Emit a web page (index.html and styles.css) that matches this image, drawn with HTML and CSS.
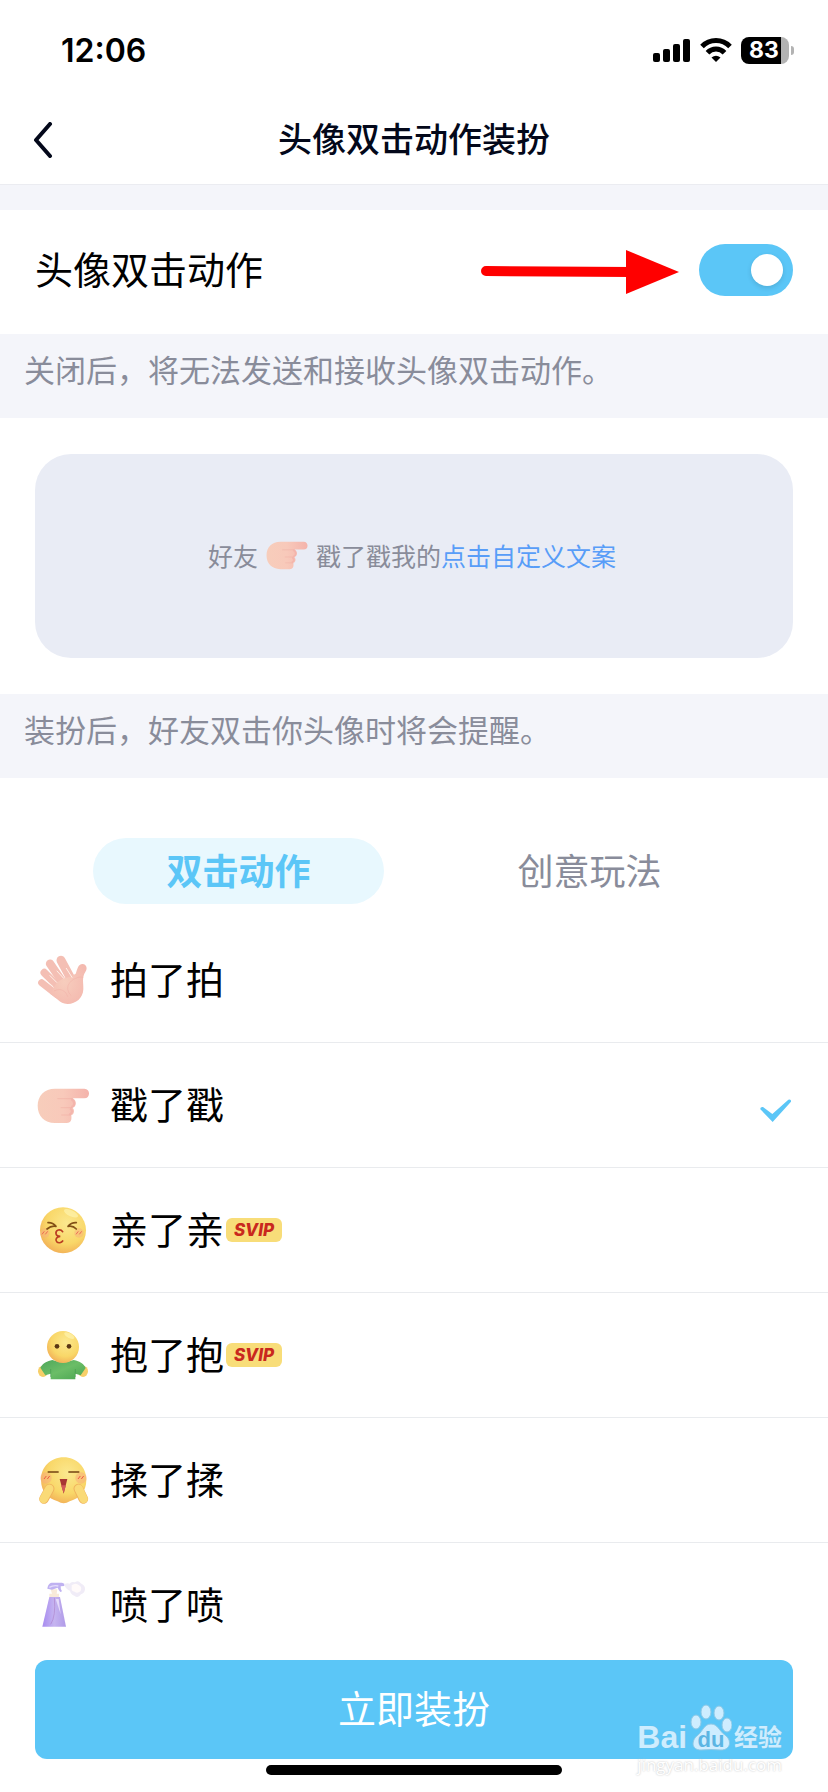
FILE: index.html
```html
<!DOCTYPE html>
<html lang="zh-CN">
<head>
    <meta charset="UTF-8">
    <meta name="viewport" content="width=device-width, initial-scale=1.0">
    <title>头像双击动作装扮</title>
    <link rel="stylesheet" href="styles.css">
</head>
<body>
    <div class="app">
        <div class="status-bar">
            <span class="time">12:06</span>
            <div class="status-icons">
                <svg class="signal" viewBox="0 0 38 24">
                    <rect x="0" y="15" width="7" height="9" rx="2"/>
                    <rect x="10" y="11" width="7" height="13" rx="2"/>
                    <rect x="20" y="6" width="7" height="18" rx="2"/>
                    <rect x="30" y="1" width="7" height="23" rx="2"/>
                </svg>
                <svg class="wifi" viewBox="0 0 32 24">
                    <path d="M2 8.500A19.500 19.500 0 0 1 30 8.500" fill="none" stroke="#000" stroke-width="5"/>
                    <path d="M7.500 14.800A11.500 11.500 0 0 1 24.500 14.800" fill="none" stroke="#000" stroke-width="5"/>
                    <path d="M11.500 19.500Q16 16 20.500 19.500L16 24Z"/>
                </svg>
                <div class="battery"><span class="battery-level">83</span></div>
            </div>
        </div>

        <header class="nav">
            <button class="back-btn" type="button" aria-label="返回">
                <svg viewBox="0 0 20 36"><path d="M17 2L3 18L17 34"/></svg>
            </button>
            <h1>头像双击动作装扮</h1>
        </header>

        <div class="switch-row">
            <label for="action_switch">头像双击动作</label>
            <svg class="arrow" viewBox="0 -4 198 48">
                <path d="M5 21L150 22" stroke="#f00" stroke-width="10" stroke-linecap="round"/>
                <path d="M145 0L198 22L145 44Z" fill="#f00"/>
            </svg>
            <input type="checkbox" role="switch" id="action_switch" class="switch" checked>
        </div>
        <p class="note">关闭后，将无法发送和接收头像双击动作。</p>

        <div class="preview">
            <div class="preview-card">
                <span>好友</span>
                <svg class="preview-icon" viewBox="6 33 158 107"><use href="#poke"/></svg>
                <span>戳了戳我的<a href="#">点击自定义文案</a></span>
            </div>
        </div>
        <p class="note">装扮后，好友双击你头像时将会提醒。</p>

        <div class="tabs">
            <button class="tab active" type="button">双击动作</button>
            <button class="tab" type="button">创意玩法</button>
        </div>

        <div class="list">
            <label class="item">
                <svg class="icon" viewBox="0 0 168 168">
                    <defs>
                        <radialGradient id="skin" cx="0.4" cy="0.45" r="0.65">
                            <stop offset="0" stop-color="#f7cdbd"/>
                            <stop offset="1" stop-color="#f4b9af"/>
                        </radialGradient>
                        <linearGradient id="finger" x1="0" y1="0" x2="1" y2="0">
                            <stop offset="0" stop-color="#f7cdbb"/>
                            <stop offset="0.5" stop-color="#f8c9ba"/>
                            <stop offset="1" stop-color="#f4b3ab"/>
                        </linearGradient>
                        <radialGradient id="face" cx="0.58" cy="0.35" r="0.68">
                            <stop offset="0" stop-color="#fbe88e"/>
                            <stop offset="0.65" stop-color="#f9d768"/>
                            <stop offset="1" stop-color="#f2b057"/>
                        </radialGradient>
                        <linearGradient id="shirt" x1="0" y1="0" x2="1" y2="1">
                            <stop offset="0" stop-color="#4fa75b"/>
                            <stop offset="0.5" stop-color="#6bbd67"/>
                            <stop offset="1" stop-color="#49a551"/>
                        </linearGradient>
                        <linearGradient id="bottle" x1="0" y1="0" x2="1" y2="0">
                            <stop offset="0" stop-color="#a78bf0"/>
                            <stop offset="0.5" stop-color="#c5b4f0"/>
                            <stop offset="1" stop-color="#b09ae8"/>
                        </linearGradient>
                    </defs>
                    <g stroke="#f4bfb4" stroke-linecap="round">
                        <path d="M20 92L66 128" stroke-width="21"/>
                        <path d="M28 62L76 110" stroke-width="23"/>
                        <path d="M45 35L88 98" stroke-width="25"/>
                        <path d="M78 25L112 88" stroke-width="27"/>
                    </g>
                    <path d="M59 102C75 78 91 78 105 75L122 65C127 54 128 36 143 36C154 37 159 49 151 60C140 77 146 92 145 112C144 139 121 157 97 156C72 154 66 136 45 125Z" fill="url(#skin)"/>
                    <path d="M57 117C77 107 92 116 98 134M145 76C128 71 99 87 98 107C98 118 103 127 109 131" fill="none" stroke="#efaaa3" stroke-width="3" opacity="0.400"/>
                    <path d="M30 82L54 104M45 71L65 91M66 57L86 79M94 49L111 76" stroke="#fff0e9" stroke-width="3" stroke-linecap="round"/>
                </svg>
                <span class="name">拍了拍</span>
                <input type="radio" name="action" value="pat">
            </label>
            <label class="item">
                <svg class="icon" viewBox="0 0 168 168">
                    <g id="poke">
                        <path d="M60 35H148C167 35 167 64 148 64H112C126 68 126 91 112 92C120 97 118 112 109 114C110 127 110 138 95 138H60C28 138 8 117 8 86C8 56 28 35 60 35Z" fill="url(#finger)"/>
                        <path d="M68 65H113M78 92H112M80 114H107" fill="none" stroke="#eda399" stroke-width="2" stroke-linecap="round" opacity="0.600"/>
                        <path d="M109 67C122 73 119 88 109 90M105 95C114 99 112 109 103 112" fill="none" stroke="#f1a8a3" stroke-width="6" opacity="0.500"/>
                    </g>
                </svg>
                <span class="name">戳了戳</span>
                <input type="radio" name="action" value="poke" checked>
                <svg class="check" viewBox="0 0 108 108"><path d="M10 67Q9 59 18 60L46 81L94 38Q103 35 102 44L47 105Z"/></svg>
            </label>
            <label class="item">
                <svg class="icon" viewBox="0 0 168 168">
                    <circle cx="84" cy="85" r="69" fill="url(#face)"/>
                    <ellipse cx="108" cy="34" rx="23" ry="9" fill="#fff6b8" opacity="0.600" transform="rotate(25 108 34)"/>
                    <circle cx="30" cy="93" r="14" fill="#f7b27c" opacity="0.500"/>
                    <circle cx="132" cy="93" r="14" fill="#f7b27c" opacity="0.500"/>
                    <path d="M39 62Q53 61 63 73Q49 70 36 81M124 62Q109 61 99 73Q114 70 124 81" fill="none" stroke="#825016" stroke-width="5" stroke-linecap="round" stroke-linejoin="round"/>
                    <path d="M83 89C76 79 61 84 63 95C64 103 72 103 76 103C64 103 60 114 65 119C70 125 80 122 83 117" fill="none" stroke="#ba3d22" stroke-width="5" stroke-linecap="round"/>
                    <path d="M21 97L28 88M31 97L38 88M123 97L130 88M133 97L140 88" stroke="#ed6c58" stroke-width="3"/>
                </svg>
                <span class="name">亲了亲</span>
                <span class="svip">SVIP</span>
                <input type="radio" name="action" value="kiss">
            </label>
            <label class="item">
                <svg class="icon" viewBox="0 0 168 168">
                    <ellipse cx="24" cy="133" rx="15" ry="17" fill="#f7cf69"/>
                    <ellipse cx="144" cy="133" rx="15" ry="17" fill="#f7cf69"/>
                    <path d="M52 99Q84 111 116 99C135 103 147 111 152 123L137 145L121 140V157H47V140L31 145L16 122C23 109 37 102 52 99Z" fill="url(#shirt)"/>
                    <path d="M47 126V150M121 126V150" stroke="#3e934a" stroke-width="3" opacity="0.500"/>
                    <circle cx="84" cy="60" r="48" fill="url(#face)"/>
                    <ellipse cx="103" cy="26" rx="17" ry="7" fill="#fff6b8" opacity="0.600" transform="rotate(28 103 26)"/>
                    <circle cx="66" cy="58" r="7" fill="#5a3714"/>
                    <circle cx="102" cy="58" r="7" fill="#5a3714"/>
                </svg>
                <span class="name">抱了抱</span>
                <span class="svip">SVIP</span>
                <input type="radio" name="action" value="hug">
            </label>
            <label class="item">
                <svg class="icon" viewBox="0 0 168 168">
                    <path d="M86 16C125 16 154 45 154 83C154 121 132 138 104 148Q86 160 68 148C40 138 18 121 18 83C18 45 47 16 86 16Z" fill="url(#face)"/>
                    <circle cx="33" cy="78" r="17" fill="#f7aa7c" opacity="0.500"/>
                    <circle cx="138" cy="78" r="17" fill="#f7aa7c" opacity="0.500"/>
                    <path d="M38 60H71M100 60H133" stroke="#744312" stroke-width="5"/>
                    <path d="M27 81L34 72M37 81L44 72M129 81L136 72M139 81L146 72" stroke="#ed5948" stroke-width="3"/>
                    <path d="M74 81H97L86 125Z" fill="#a93634"/>
                    <path d="M78 100H93L86 123Z" fill="#d35a58"/>
                    <path d="M44 110L27 141M130 110L145 141" stroke="#f0b35c" stroke-width="29" stroke-linecap="round"/>
                    <path d="M43 110L26 141M131 110L146 141" stroke="#fada77" stroke-width="25" stroke-linecap="round"/>
                </svg>
                <span class="name">揉了揉</span>
                <input type="radio" name="action" value="rub">
            </label>
            <label class="item">
                <svg class="icon" viewBox="0 0 168 168">
                    <path d="M43 60H75L93 149H22Z" fill="url(#bottle)"/>
                    <path d="M62 66L77 112L71 66Z" fill="#e5dafa"/>
                    <path d="M58 62Q63 118 47 142" fill="none" stroke="#ad83cb" stroke-width="2"/>
                    <path d="M47 37H67L65 50H72V60H43V50H51Z" fill="#f8ead9"/>
                    <path d="M37 35C39 22 44 17 53 17H81L88 20V27L77 28Q76 35 81 43L76 45Q71 40 68 32L51 38Z" fill="#bfb1f1"/>
                    <path d="M43 31Q55 24 70 27" fill="none" stroke="#e5dcfb" stroke-width="4"/>
                    <path d="M89 21Q97 17 104 20Q109 12 119 16Q131 8 137 19Q151 25 150 37Q149 49 138 52Q129 65 118 56Q107 52 105 41Q97 40 89 27Z" fill="#f0ecf7"/>
                    <path d="M110 25Q123 16 132 25Q142 30 137 42Q127 51 119 44Q108 42 110 33Z" fill="#fffafa"/>
                </svg>
                <span class="name">喷了喷</span>
                <input type="radio" name="action" value="spray">
            </label>
        </div>

        <div class="footer">
            <button class="submit-btn" type="button">立即装扮</button>
            <div class="home-bar"></div>
            <div class="watermark">
                <div class="watermark-logo">
                    <span class="bai">Bai</span>
                    <svg class="paw" viewBox="0 0 42 48">
                        <g fill="#ceedff" stroke="#8dc8e5" stroke-width="1">
                            <ellipse cx="6" cy="18" rx="5" ry="7"/>
                            <ellipse cx="16" cy="8" rx="5" ry="7"/>
                            <ellipse cx="29" cy="9" rx="5" ry="7"/>
                            <ellipse cx="37" cy="21" rx="5" ry="7"/>
                            <path d="M21 20C14 20 13 27 8 31C1 36 1 46 11 46Q21 45 31 46C41 46 42 36 35 31C29 27 28 20 21 20Z"/>
                        </g>
                        <text x="21" y="43" text-anchor="middle" class="du">du</text>
                    </svg>
                    <span class="jingyan">经验</span>
                </div>
                <div class="watermark-url">jingyan.baidu.com</div>
            </div>
        </div>
    </div>
</body>
</html>
```

FILE: styles.css
```css
* {
    box-sizing: border-box;
}
body {
    margin: 0;
    font-family: "Liberation Sans", "Noto Sans CJK SC", sans-serif;
    background-color: #fff;
    color: #000;
}
button {
    border: none;
    background: none;
    padding: 0;
    font-family: inherit;
    cursor: pointer;
}
svg {
    display: block;
    flex: none;
}
.app {
    display: flex;
    flex-direction: column;
    height: 100vh;
}

/* status bar */
.status-bar {
    display: flex;
    flex: none;
    align-items: center;
    justify-content: space-between;
    height: 100px;
    padding: 0 34px 0 61px;
    font-family: Inter, sans-serif;
}
.time {
    font-size: 32px;
    font-weight: 600;
}
.status-icons {
    display: flex;
    align-items: center;
    gap: 9px;
}
.signal {
    width: 38px;
    height: 24px;
}
.wifi {
    width: 32px;
    height: 24px;
}
.battery {
    position: relative;
    width: 48px;
    height: 27px;
    margin-right: 5px;
    border-radius: 8px;
    background: linear-gradient(to right, #000 40px, #b3b3b3 40px);
}
.battery::after {
    content: "";
    position: absolute;
    right: -5px;
    top: 9px;
    width: 3px;
    height: 9px;
    border-radius: 0 3px 3px 0;
    background: #b3b3b3;
}
.battery-level {
    display: block;
    padding-left: 8px;
    color: #fff;
    font-size: 23px;
    font-weight: 700;
    line-height: 27px;
}

/* title bar */
.nav {
    display: grid;
    flex: none;
    grid-template-columns: 60px 1fr 60px;
    align-items: center;
    height: 85px;
    padding-bottom: 4px;
    border-bottom: 1px solid #ebecf1;
}
.back-btn {
    padding-left: 33px;
}
.back-btn svg {
    width: 20px;
    height: 36px;
    fill: none;
    stroke: #03081a;
    stroke-width: 4;
    stroke-linecap: round;
    stroke-linejoin: round;
}
.nav h1 {
    margin: 0;
    color: #03081a;
    font-size: 34px;
    font-weight: 500;
    line-height: 48px;
    text-align: center;
}

.switch-row {
    display: flex;
    flex: none;
    align-items: center;
    height: 149px;
    padding: 0 35px 4px;
    border-top: 25px solid #f4f5fa;
    font-size: 38px;
}
.switch-row label {
    padding-bottom: 6px;
}
.arrow {
    width: 198px;
    height: 48px;
    margin-left: auto;
    margin-right: 20px;
}
.switch {
    appearance: none;
    position: relative;
    width: 94px;
    height: 52px;
    margin: 0;
    border-radius: 26px;
    background: #d5d7de;
    cursor: pointer;
}
.switch::after {
    content: "";
    position: absolute;
    top: 10px;
    left: 10px;
    width: 32px;
    height: 32px;
    border-radius: 50%;
    background: #fff;
    box-shadow: 0 2px 5px rgba(0, 0, 0, 0.12);
}
.switch:checked {
    background: #5bc6f7;
}
.switch:checked::after {
    left: 52px;
}
.note {
    flex: none;
    margin: 0;
    padding: 14px 24px 22px;
    background: #f4f5fa;
    color: #898c9a;
    font-size: 31px;
    line-height: 48px;
}

/* preview */
.preview {
    flex: none;
    padding: 36px 35px;
}
.preview-card {
    display: flex;
    align-items: center;
    justify-content: center;
    gap: 8px;
    height: 204px;
    padding: 0 4px 2px 0;
    border-radius: 36px;
    background: #e9ecf5;
    color: #898c9a;
    font-size: 25px;
}
.preview-card a {
    color: #589df8;
    text-decoration: none;
}
.preview-icon {
    width: 42px;
    height: 29px;
}

.tabs {
    display: grid;
    flex: none;
    grid-template-columns: 1fr 1fr;
    gap: 60px;
    padding: 60px 93px 14px;
}
.tab {
    height: 66px;
    padding-bottom: 4px;
    border-radius: 33px;
    color: #898c9a;
    font-size: 36px;
}
.tab.active {
    background: #e8f8fe;
    color: #5bc6f7;
    font-weight: 700;
}

/* action list */
.list {
    flex: 1;
    min-height: 0;
    overflow: hidden;
}
.item {
    display: flex;
    align-items: center;
    height: 125px;
    padding: 0 35px;
    border-bottom: 1px solid #e9ebee;
    cursor: pointer;
}
.item .icon {
    width: 56px;
    height: 56px;
}
.name {
    padding: 0 0 5px 19px;
    font-size: 38px;
}
.svip {
    width: 56px;
    height: 24px;
    margin-left: 2px;
    border-radius: 6px;
    background: #f8dd79;
    color: #c9281e;
    font-family: Inter, sans-serif;
    font-size: 17px;
    font-style: italic;
    font-weight: 800;
    line-height: 24px;
    text-align: center;
}
.item input {
    appearance: none;
    margin: 0 0 0 auto;
}
.check {
    display: none;
    width: 36px;
    height: 36px;
    fill: #5bc6f7;
}
.item input:checked + .check {
    display: block;
}

/* bottom button */
.footer {
    position: relative;
    flex: none;
    padding: 10px 35px 17px;
}
.submit-btn {
    display: block;
    width: 100%;
    height: 99px;
    padding-bottom: 6px;
    border-radius: 12px;
    background: #5bc6f7;
    color: #fff;
    font-size: 38px;
}
.home-bar {
    width: 296px;
    height: 10px;
    margin: 6px auto 0;
    border-radius: 5px;
    background: #000;
}
.watermark {
    position: absolute;
    right: 46px;
    bottom: 14px;
    color: #ceedff;
    text-shadow: 0 0 1px #6fb4d6;
}
.watermark-logo {
    display: flex;
    align-items: flex-end;
    justify-content: space-between;
}
.bai {
    font-size: 32px;
    font-weight: 700;
    line-height: 30px;
}
.paw {
    width: 42px;
    height: 48px;
}
.du {
    fill: #5bb5e3;
    font-size: 22px;
    font-weight: 700;
    text-shadow: none;
}
.jingyan {
    font-size: 24px;
    font-weight: 700;
    line-height: 28px;
}
.watermark-url {
    color: #fff;
    font-family: "Open Sans", sans-serif;
    font-size: 17px;
    line-height: 26px;
    text-shadow: 0 0 2px #bbb;
}
```
